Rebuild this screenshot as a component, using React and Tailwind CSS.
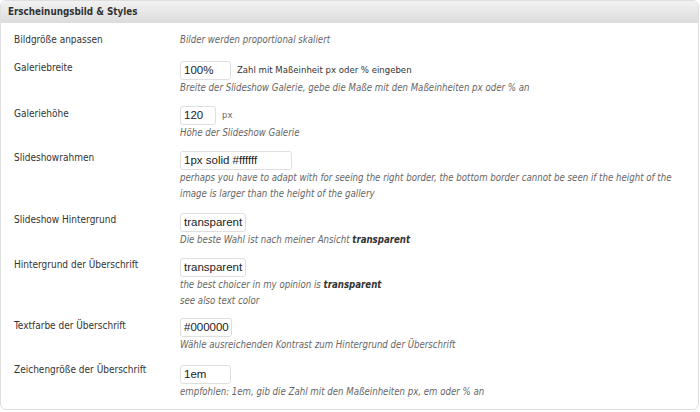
export default function App() {
  const label = "text-[10px] leading-[14px] text-[#333] pl-[13px]";
  const desc = "text-[9.6px] leading-[16px] italic text-[#666]";
  const input =
    "h-[19px] border border-[#dfdfdf] rounded-[3px] bg-white px-[3px] text-[11.5px] leading-[17px] text-[#222] flex items-center";
  const inFont = { fontFamily: '"Liberation Sans", Arial, sans-serif' };
  return (
    <div className="w-[700px] h-[412px] bg-white" style={{ fontFamily: '"DejaVu Sans Condensed", "DejaVu Sans", Verdana, sans-serif' }}>
      <div className="w-[699px] h-[410px] border border-[#dfdfdf] rounded-[6px] overflow-hidden">
        <div className="h-[22px] bg-gradient-to-b from-[#f2f2f2] to-[#dcdcdc] flex items-center pl-[7px]">
          <span className="text-[9.8px] font-bold text-[#333]">Erscheinungsbild &amp; Styles</span>
        </div>

        <div className="flex flex-col">
          {/* Row 1 */}
          <div className="grid grid-cols-[179px_1fr] mt-[10px]">
            <div className={label}>Bildgröße anpassen</div>
            <div className={desc + " mt-[-1px]"}>Bilder werden proportional skaliert</div>
          </div>

          {/* Row 2 */}
          <div className="grid grid-cols-[179px_1fr] mt-[13px]">
            <div className={label}>Galeriebreite</div>
            <div>
              <div className="flex items-center gap-[6px]">
                <div className={input + " w-[51px]"} style={inFont}>100%</div>
                <span className="text-[9.5px] text-[#333]">Zahl mit Maßeinheit px oder % eingeben</span>
              </div>
              <div className={desc}>Breite der Slideshow Galerie, gebe die Maße mit den Maßeinheiten px oder % an</div>
            </div>
          </div>

          {/* Row 3 */}
          <div className="grid grid-cols-[179px_1fr] mt-[10px]">
            <div className={label + " pt-[1px]"}>Galeriehöhe</div>
            <div>
              <div className="flex items-center gap-[6px]">
                <div className={input + " w-[36px]"} style={inFont}>120</div>
                <span className="text-[9.5px] text-[#666]">px</span>
              </div>
              <div className={desc}>Höhe der Slideshow Galerie</div>
            </div>
          </div>

          {/* Row 4 */}
          <div className="grid grid-cols-[179px_1fr] mt-[10px]">
            <div className={label}>Slideshowrahmen</div>
            <div>
              <div className={input + " w-[112px]"} style={inFont}>1px solid #ffffff</div>
              <div className={desc + " whitespace-nowrap"}>
                perhaps you have to adapt with for seeing the right border, the bottom border cannot be seen if the height of the
                <br />
                image is larger than the height of the gallery
              </div>
            </div>
          </div>

          {/* Row 5 */}
          <div className="grid grid-cols-[179px_1fr] mt-[11px]">
            <div className={label}>Slideshow Hintergrund</div>
            <div>
              <div className={input + " w-[66px]"} style={inFont}>transparent</div>
              <div className={desc}>
                Die beste Wahl ist nach meiner Ansicht <b className="font-bold text-[#333]">transparent</b>
              </div>
            </div>
          </div>

          {/* Row 6 */}
          <div className="grid grid-cols-[179px_1fr] mt-[10px]">
            <div className={label}>Hintergrund der Überschrift</div>
            <div>
              <div className={input + " w-[66px]"} style={inFont}>transparent</div>
              <div className={desc}>
                the best choicer in my opinion is <b className="font-bold text-[#333]">transparent</b>
                <br />
                see also text color
              </div>
            </div>
          </div>

          {/* Row 7 */}
          <div className="grid grid-cols-[179px_1fr] mt-[9px]">
            <div className={label + " pt-[1px]"}>Textfarbe der Überschrift</div>
            <div>
              <div className={input + " w-[52px]"} style={inFont}>#000000</div>
              <div className={desc}>Wähle ausreichenden Kontrast zum Hintergrund der Überschrift</div>
            </div>
          </div>

          {/* Row 8 */}
          <div className="grid grid-cols-[179px_1fr] mt-[12px]">
            <div className={label + " mt-[-2px]"}>Zeichengröße der Überschrift</div>
            <div>
              <div className={input + " w-[51px]"} style={inFont}>1em</div>
              <div className={desc}>empfohlen: 1em, gib die Zahl mit den Maßeinheiten px, em oder % an</div>
            </div>
          </div>
        </div>
      </div>
    </div>
  );
}
